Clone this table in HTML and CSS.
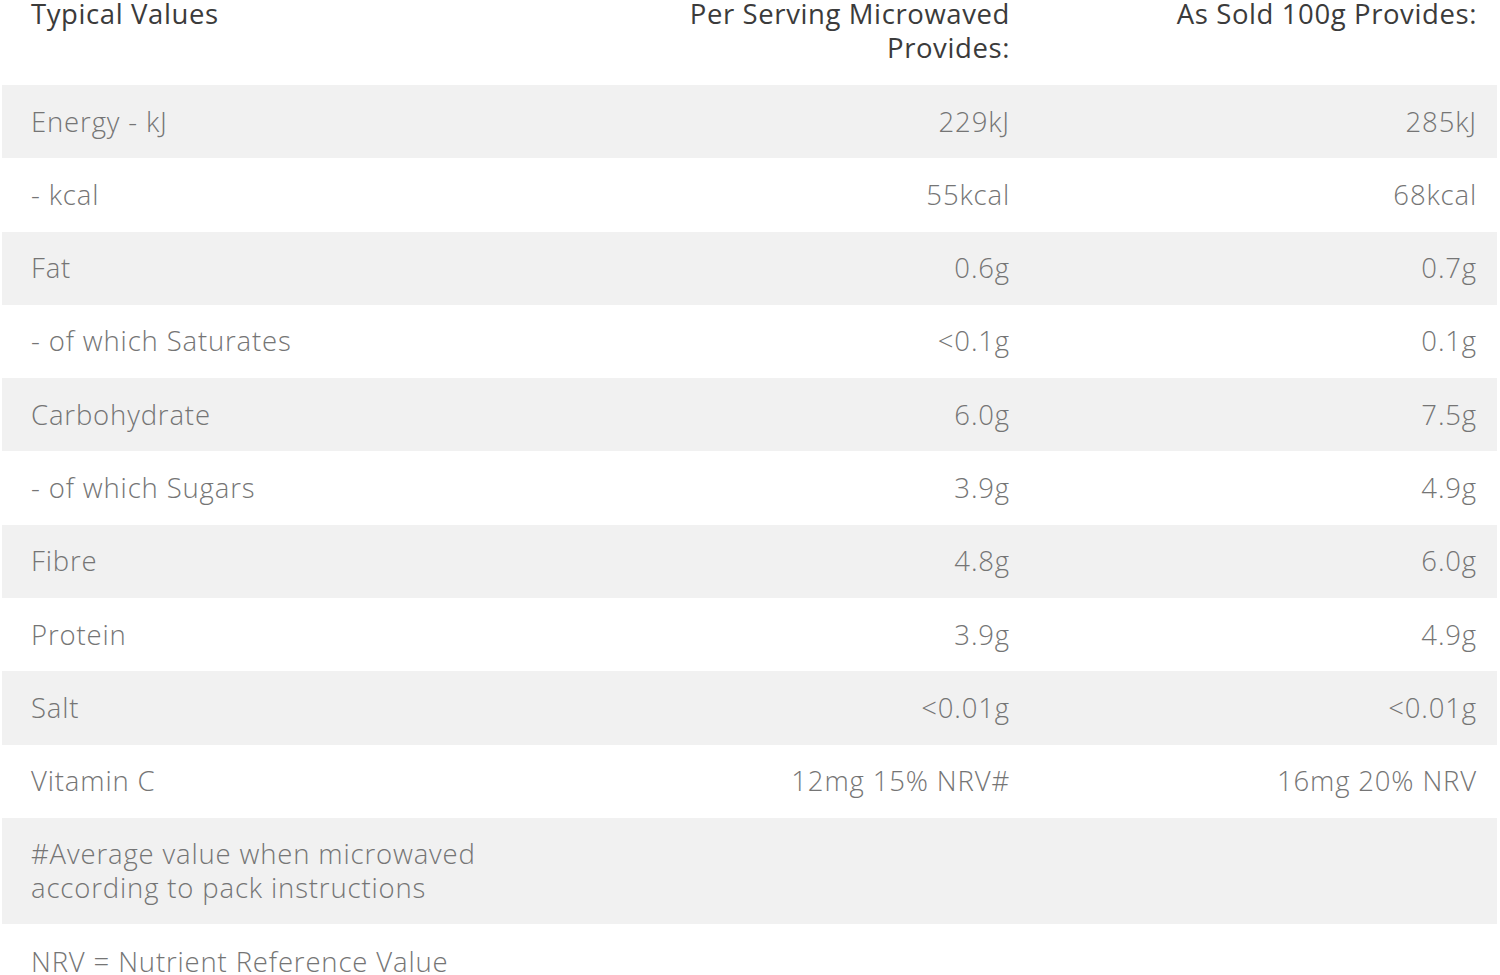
FILE: index.html
```html
<!DOCTYPE html>
<html>
<head>
<meta charset="utf-8">
<link rel="stylesheet" href="styles.css">
</head>
<body>
<div class="table">
  <div class="row head">
    <div class="c1">Typical Values</div>
    <div class="c2">Per Serving Microwaved Provides:</div>
    <div class="c3">As Sold 100g Provides:</div>
  </div>
  <div class="row alt"><div class="c1">Energy - kJ</div><div class="c2">229kJ</div><div class="c3">285kJ</div></div>
  <div class="row"><div class="c1">- kcal</div><div class="c2">55kcal</div><div class="c3">68kcal</div></div>
  <div class="row alt"><div class="c1">Fat</div><div class="c2">0.6g</div><div class="c3">0.7g</div></div>
  <div class="row"><div class="c1">- of which Saturates</div><div class="c2">&lt;0.1g</div><div class="c3">0.1g</div></div>
  <div class="row alt"><div class="c1">Carbohydrate</div><div class="c2">6.0g</div><div class="c3">7.5g</div></div>
  <div class="row"><div class="c1">- of which Sugars</div><div class="c2">3.9g</div><div class="c3">4.9g</div></div>
  <div class="row alt"><div class="c1">Fibre</div><div class="c2">4.8g</div><div class="c3">6.0g</div></div>
  <div class="row"><div class="c1">Protein</div><div class="c2">3.9g</div><div class="c3">4.9g</div></div>
  <div class="row alt"><div class="c1">Salt</div><div class="c2">&lt;0.01g</div><div class="c3">&lt;0.01g</div></div>
  <div class="row"><div class="c1">Vitamin C</div><div class="c2">12mg 15% NRV#</div><div class="c3">16mg 20% NRV</div></div>
  <div class="row alt note"><div class="c1">#Average value when microwaved<br>according to pack instructions</div><div class="c2"></div><div class="c3"></div></div>
  <div class="row foot"><div class="c1">NRV = Nutrient Reference Value</div><div class="c2"></div><div class="c3"></div></div>
</div>
</body>
</html>
```
FILE: styles.css
```css
html, body {
  margin: 0;
  padding: 0;
  background: #ffffff;
  overflow: hidden;
}
body {
  font-family: "Open Sans", "Liberation Sans", sans-serif;
  font-weight: 300;
  font-size: 27.5px;
  line-height: 34px;
  letter-spacing: 0.85px;
  color: #757575;
}
.table {
  margin: -3px 3px 0 2px;
}
.row {
  display: grid;
  grid-template-columns: 1fr 380px 467px;
  padding: 19.65px 0;
}
.row.alt {
  background: #f1f1f1;
}
.c1 {
  padding-left: 29px;
}
.c2, .c3 {
  text-align: right;
  padding-right: 20px;
}
.head {
  padding: 0 0 20px 0;
  color: #3b3b3b;
  font-weight: 400;
  letter-spacing: 0.6px;
}
.head .c2 {
  padding-left: 20px;
}
.note {
  padding: 19px 0;
}
.foot {
  padding: 21px 0 0 0;
}
```
